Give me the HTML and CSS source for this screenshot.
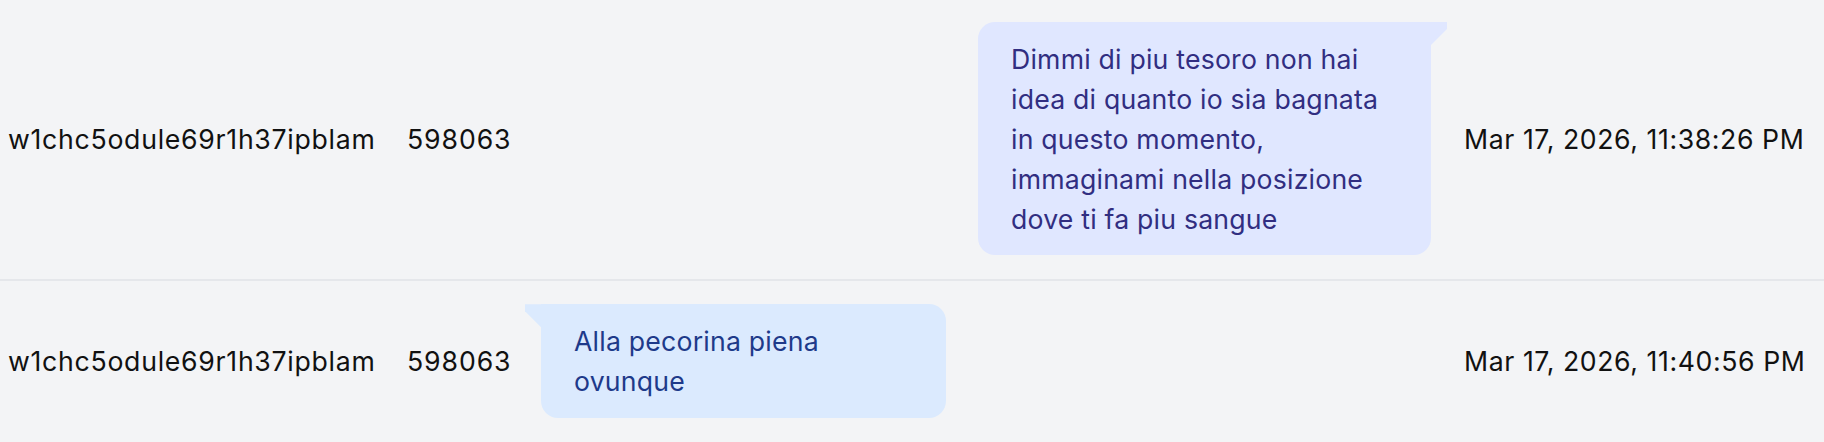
FILE: index.html
```html
<!DOCTYPE html>
<html lang="it">
<head>
<meta charset="utf-8">
<title>Messaggi</title>
<link rel="stylesheet" href="styles.css">
</head>
<body>
<div class="table">
  <div class="row">
    <div class="cell cell-id">w1chc5odule69r1h37ipblam</div>
    <div class="cell cell-num">598063</div>
    <div class="cell cell-msg cell-msg--out">
      <div class="bubble bubble--out">Dimmi di piu tesoro non hai idea di quanto io sia bagnata in questo momento, immaginami nella posizione dove ti fa piu sangue</div>
    </div>
    <div class="cell cell-date">Mar 17, 2026, 11:38:26 PM</div>
  </div>
  <div class="row">
    <div class="cell cell-id">w1chc5odule69r1h37ipblam</div>
    <div class="cell cell-num">598063</div>
    <div class="cell cell-msg cell-msg--in">
      <div class="bubble bubble--in">Alla pecorina piena ovunque</div>
    </div>
    <div class="cell cell-date">Mar 17, 2026, 11:40:56 PM</div>
  </div>
</div>
</body>
</html>
```

FILE: styles.css
```css
html, body {
  margin: 0;
  padding: 0;
  background: #f3f4f6;
}

body {
  font-family: Inter, "Noto Sans", "Liberation Sans", sans-serif;
  font-size: 26.67px;
  line-height: 40px;
  color: #111111;
  overflow: hidden;
}

.table {
  margin-top: -1px;
}

.row {
  display: grid;
  grid-template-columns: 399px 118px 1fr 339px;
  align-items: center;
  padding: 23px 21px 24px 8px;
  border-bottom: 2px solid #e5e7eb;
}

.cell {
  white-space: nowrap;
  letter-spacing: 0.72px;
}

.cell-num {
  letter-spacing: 0.9px;
}

.cell-date {
  letter-spacing: 0.58px;
}

.cell-msg {
  display: flex;
  padding-right: 17px;
  white-space: normal;
  letter-spacing: 0.2px;
}

.cell-msg--out {
  justify-content: flex-end;
}

.cell-msg--in {
  justify-content: flex-start;
}

.bubble {
  position: relative;
  box-sizing: border-box;
  padding: 16.67px 33px;
}

.bubble::before {
  content: "";
  position: absolute;
  top: 0;
  width: 16px;
  height: 23px;
}

.bubble--out {
  max-width: 453px;
  margin-right: 16px;
  background: #e0e7ff;
  color: #312e81;
  border-radius: 17px 0 17px 17px;
}

.bubble--out::before {
  left: 100%;
  background: #e0e7ff;
  clip-path: polygon(0 0, 100% 0, 100% 7px, 0 100%);
}

.bubble--in {
  max-width: 405px;
  margin-left: 16px;
  background: #dbeafe;
  color: #1e3a8a;
  border-radius: 0 17px 17px 17px;
}

.bubble--in::before {
  right: 100%;
  background: #dbeafe;
  clip-path: polygon(0 0, 100% 0, 100% 100%, 0 7px);
}
```
